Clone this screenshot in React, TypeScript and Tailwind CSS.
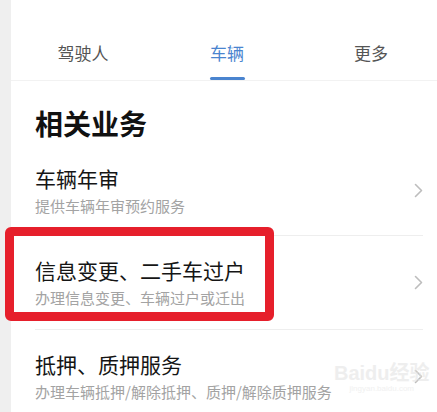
import React from "react";

const items = [
  { title: "车辆年审", desc: "提供车辆年审预约服务" },
  { title: "信息变更、二手车过户", desc: "办理信息变更、车辆过户或迁出" },
  { title: "抵押、质押服务", desc: "办理车辆抵押/解除抵押、质押/解除质押服务" },
];

const tabs = ["驾驶人", "车辆", "更多"];

function Chevron() {
  return (
    <svg width="9" height="15" viewBox="0 0 9 15" className="shrink-0">
      <polyline points="1.5,1.5 7.5,7.5 1.5,13.5" fill="none" stroke="#bdbdbd" strokeWidth="1.6" strokeLinecap="round" strokeLinejoin="round" />
    </svg>
  );
}

export default function App() {
  return (
    <div
      className="relative flex w-[437px] h-[412px] overflow-hidden bg-white"
      style={{ fontFamily: '"Noto Sans CJK SC", "Noto Sans", sans-serif' }}
    >
      {/* left gray strip */}
      <div className="w-[11px] shrink-0 bg-[#efefef]" />

      <div className="flex-1 flex flex-col min-w-0">
        {/* bottom of the card above */}
        <div className="mx-[24px] h-[2px] rounded-b-lg bg-white shadow-[0_3px_10px_rgba(0,0,0,0.07)]" />

        {/* tabs */}
        <div className="grid grid-cols-[144px_144px_144px] h-[81px] border-b border-[#f2f2f2]">
          {tabs.map((t, i) => (
            <div key={t} className="flex flex-col items-center pt-[41px]">
              <span className={`text-[17px] leading-[24px] ${i === 1 ? "text-[#4a84cf]" : "text-[#555555]"}`}>{t}</span>
              {i === 1 && <div className="mt-[12px] w-[35px] h-[3px] rounded-full bg-[#4a84cf]" />}
            </div>
          ))}
        </div>

        {/* content */}
        <div className="pl-[24px] pr-[14px]">
          <h2 className="mt-[24px] text-[28px] leading-[36px] font-bold text-[#111111]">相关业务</h2>
          <div className="flex flex-col">
            {items.map((it, i) => (
              <div
                key={it.title}
                className={`flex items-center justify-between ${i === 0 ? "pt-[23px] pb-[18px]" : "pt-[20px] pb-[20px] border-t border-[#eeeeee]"}`}
              >
                <div className="flex flex-col min-w-0">
                  <span className="text-[21px] leading-[28px] text-[#151515] whitespace-nowrap">{it.title}</span>
                  <span className="mt-[3px] text-[15px] leading-[22px] text-[#a3a3a3] whitespace-nowrap">{it.desc}</span>
                </div>
                <Chevron />
              </div>
            ))}
          </div>
        </div>
      </div>

      {/* red annotation box */}
      <div className="absolute left-[5px] top-[227px] w-[269px] h-[94px] border-[9px] border-[#e61f2b] rounded-[6px]" />

      {/* watermark */}
      <div className="absolute left-[334px] top-[362px] flex flex-col items-center opacity-60">
        <span className="text-[20px] leading-[22px] font-bold text-[#e4e4e4]" style={{ fontFamily: '"Liberation Sans", "Noto Sans CJK SC", sans-serif' }}>Baidu经验</span>
        <span className="text-[8px] leading-[10px] text-[#e8e8e8]" style={{ fontFamily: '"Liberation Sans", sans-serif' }}>jingyan.baidu.com</span>
      </div>
    </div>
  );
}
